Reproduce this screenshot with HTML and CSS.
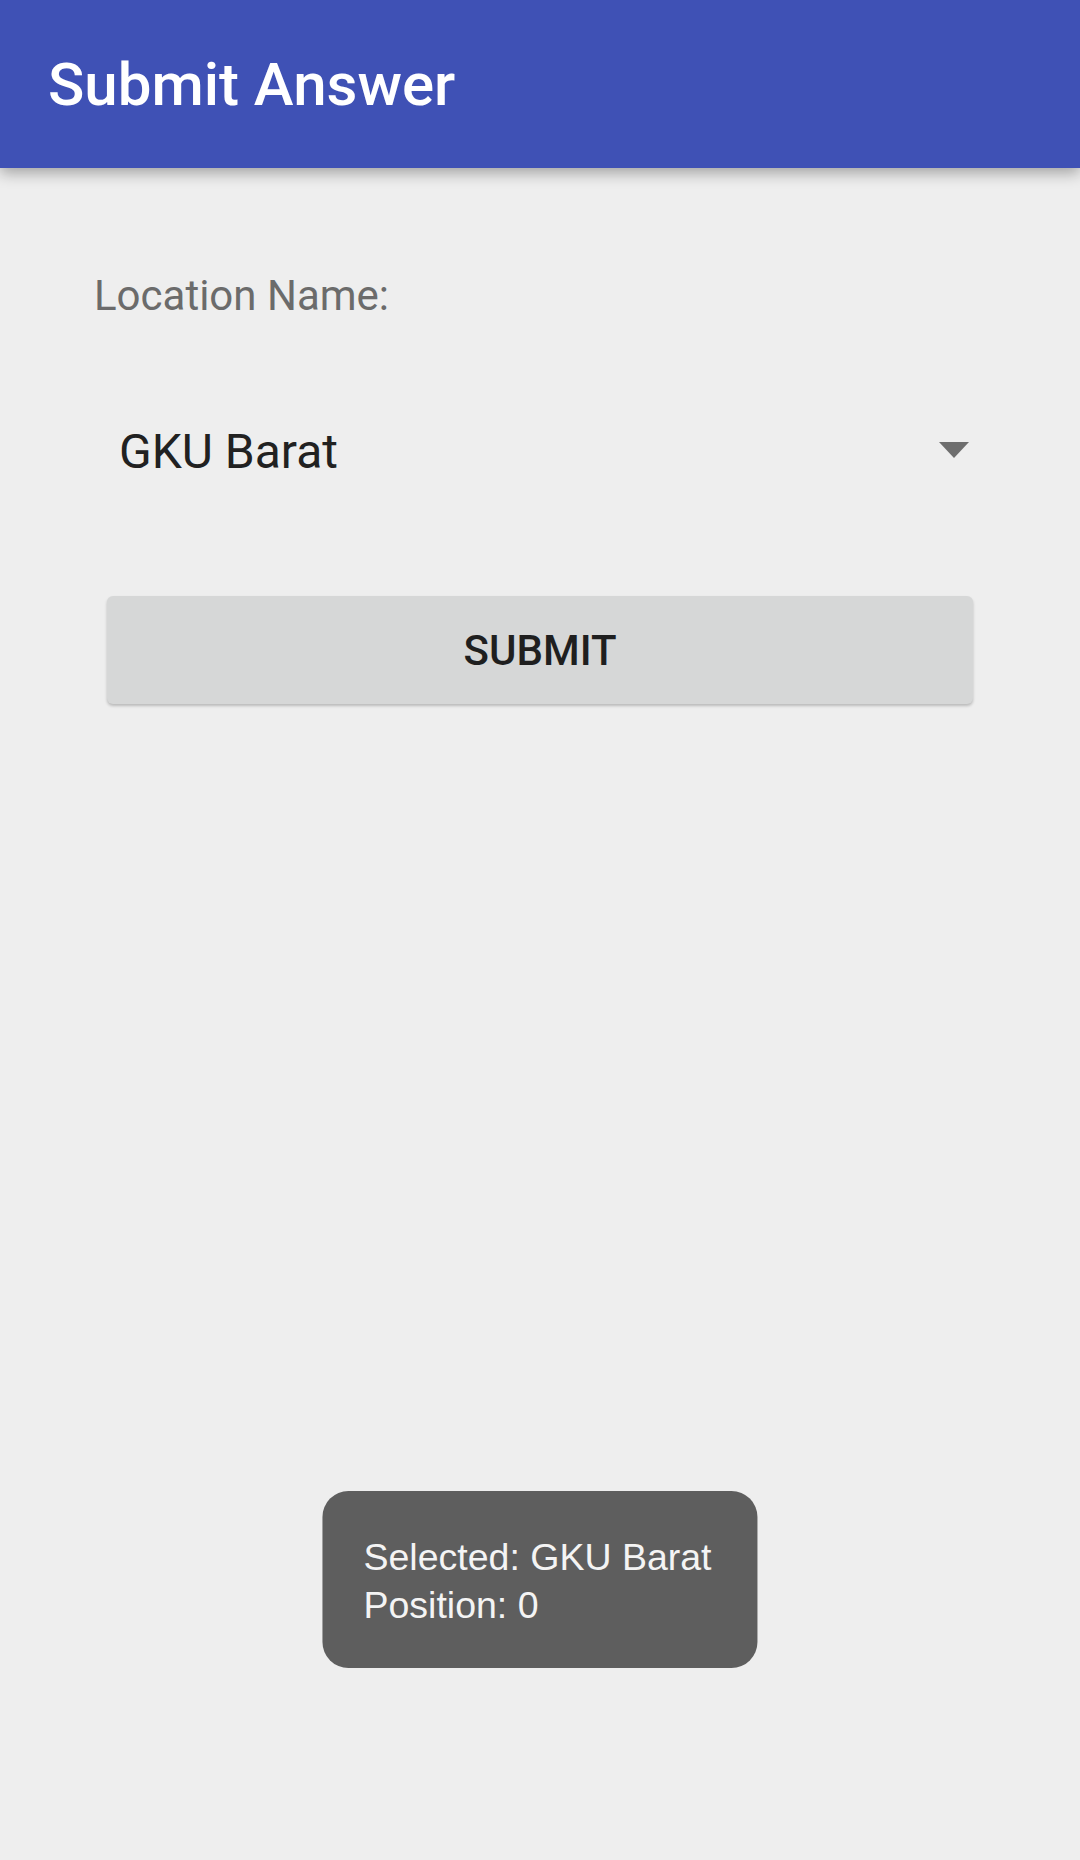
FILE: index.html
```html
<!DOCTYPE html>
<html>
<head>
<meta charset="utf-8">
<link rel="stylesheet" href="styles.css">
</head>
<body>
<div class="screen">
  <header class="appbar">
    <h1 class="title">Submit Answer</h1>
  </header>
  <main class="content">
    <div class="label">Location Name:</div>
    <div class="spinner">
      <span class="spinner-text">GKU Barat</span>
      <svg class="arrow" width="30" height="16" viewBox="0 0 30 16"><path d="M0 0 H30 L15 16 Z" fill="#6e6e6e"/></svg>
    </div>
    <button class="btn">SUBMIT</button>
  </main>
  <div class="toast">
    <div>Selected: GKU Barat</div>
    <div>Position: 0</div>
  </div>
</div>
</body>
</html>
```
FILE: styles.css
```css
html, body {
  margin: 0;
  padding: 0;
}
body {
  background: #eeeeee;
  font-family: Roboto, "Noto Sans", sans-serif;
}
.screen {
  position: relative;
  width: 1080px;
  height: 1860px;
  overflow: hidden;
  background: #eeeeee;
}
.appbar {
  height: 168px;
  background: #3f51b5;
  display: flex;
  align-items: center;
  padding-left: 48px;
  box-sizing: border-box;
  box-shadow: 0 5px 14px rgba(0, 0, 0, 0.32);
  position: relative;
  z-index: 1;
}
.title {
  margin: 0;
  color: #ffffff;
  font-family: Roboto, sans-serif;
  font-weight: 500;
  font-size: 60px;
  line-height: 70px;
  margin-top: 2px;
}
.content {
  padding: 104px 107px 0 94px;
  display: flex;
  flex-direction: column;
}
.label {
  font-size: 42px;
  line-height: 48px;
  color: #6b6b6b;
}
.spinner {
  margin-top: 104px;
  display: flex;
  align-items: center;
  justify-content: space-between;
  padding-left: 25px;
  padding-right: 4px;
  height: 56px;
}
.spinner-text {
  font-size: 48px;
  line-height: 56px;
  color: #212121;
}
.arrow {
  display: block;
  margin-top: -4px;
}
.btn {
  margin-top: 116px;
  margin-left: 13px;
  height: 108px;
  width: 866px;
  border: none;
  border-radius: 6px;
  background: #d6d7d7;
  box-shadow: 0 2px 3px rgba(0, 0, 0, 0.22);
  font-family: Roboto, sans-serif;
  font-weight: 500;
  font-size: 42px;
  color: #1f1f1f;
  letter-spacing: 0;
  padding: 0;
}
.toast {
  position: absolute;
  top: 1491px;
  left: 50%;
  transform: translateX(-50%);
  background: #5e5e5e;
  border-radius: 26px;
  padding: 42px 46px 39px 41px;
  color: #f4f4f4;
  font-family: "Liberation Sans", Arial, sans-serif;
  font-size: 37.5px;
  line-height: 48px;
  white-space: nowrap;
}
```
